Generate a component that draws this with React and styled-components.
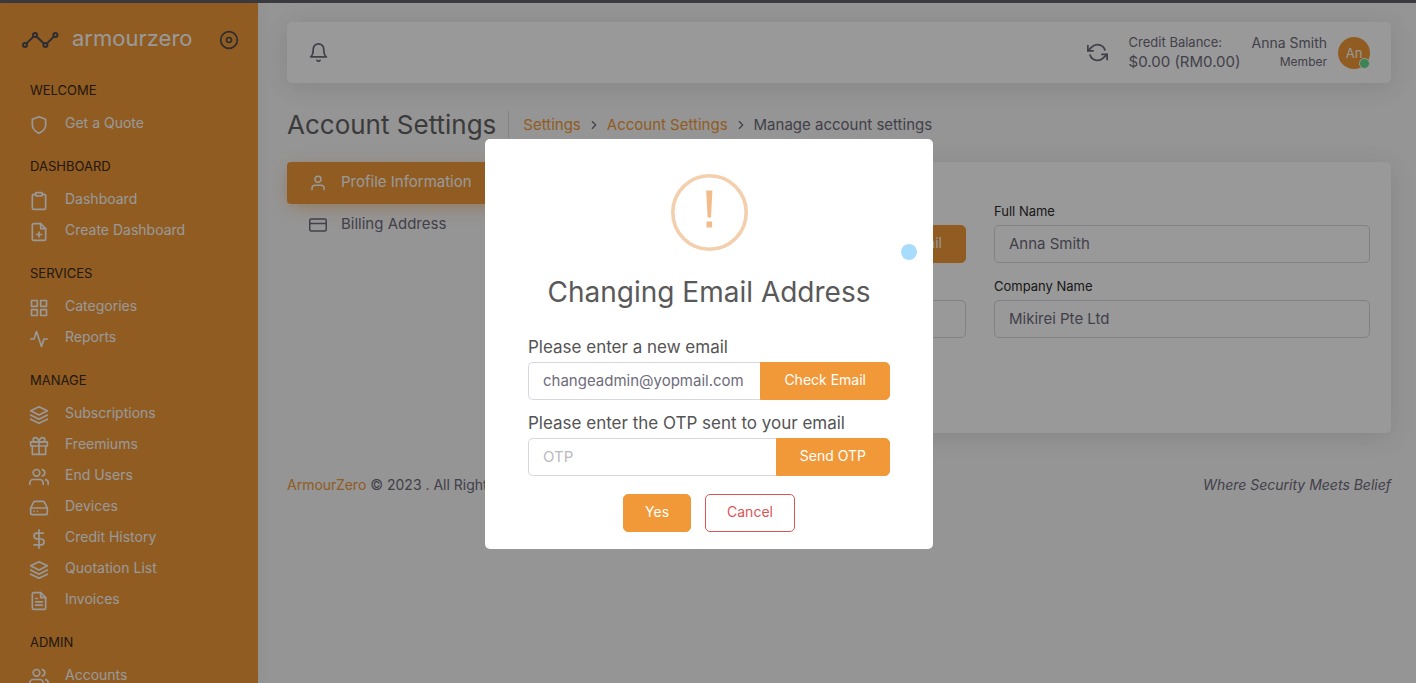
import React from "react";
import styled, { createGlobalStyle, css } from "styled-components";
import {
  FiActivity, FiBell, FiChevronRight, FiClipboard, FiCreditCard, FiDisc,
  FiDollarSign, FiFilePlus, FiFileText, FiGift, FiGrid, FiHardDrive,
  FiLayers, FiRefreshCcw, FiShield, FiUser, FiUsers,
} from "react-icons/fi";

const orange = "#f19938";
const bodyText = "#6e6b7b";

const GlobalStyle = createGlobalStyle`
  *, *::before, *::after { box-sizing: border-box; }
  body {
    margin: 0;
    background: #f8f8f8;
    color: ${bodyText};
    font: 400 14px/20px Inter, "Open Sans", sans-serif;
  }
  button, input { font: inherit; }
  a { text-decoration: none; color: inherit; }
`;

const Screen = styled.div`
  height: 100vh;
  display: flex;
  flex-direction: column;
  overflow: hidden;
`;

const TopStrip = styled.div`
  flex: none;
  height: 3px;
  background: #3a3a3f;
`;

const Shell = styled.div`
  flex: 1;
  min-height: 0;
  display: flex;
`;

const Sidebar = styled.aside`
  flex: none;
  width: 258px;
  overflow: hidden;
  background: ${orange};
  box-shadow: 0 0 15px rgba(34, 41, 47, 0.05);
`;

const Brand = styled.div`
  display: flex;
  align-items: center;
  height: 73px;
  padding: 0 19px 0 22px;
`;

const BrandName = styled.a`
  flex: 1;
  margin-left: 13px;
  padding-bottom: 4px;
  color: #fff;
  font-size: 22px;
  line-height: 28px;
`;

const PinButton = styled.button`
  display: flex;
  padding: 0;
  border: 0;
  background: none;
  color: #4a4a52;
  font-size: 20px;
`;

const MenuGroup = styled.section`
  padding: 0 29px;
  margin: 5px 0 18px;

  & + & { margin-top: 0; }
`;

const MenuHeading = styled.h2`
  margin: 0 0 8px 1px;
  color: #38281c;
  font-size: 13px;
  font-weight: 400;
  line-height: 19px;
`;

const MenuLink = styled.a`
  display: flex;
  align-items: center;
  gap: 16px;
  height: 31px;
  padding-bottom: 2px;
  color: #fff;
  white-space: nowrap;

  svg { flex: none; font-size: 20px; margin-top: 5px; }
`;

const Main = styled.main`
  flex: 1;
  min-width: 0;
  padding: 19px 25px 0 29px;
`;

const panel = css`
  background: #fff;
  border-radius: 5px;
  box-shadow: 0 4px 24px rgba(34, 41, 47, 0.12);
`;

const Navbar = styled.header`
  ${panel}
  display: flex;
  align-items: center;
  height: 61px;
  padding: 0 21px;
`;

const IconButton = styled.button`
  display: flex;
  padding: 0;
  border: 0;
  background: none;
  color: ${bodyText};
  font-size: 21px;
`;

const NavRight = styled.div`
  display: flex;
  align-items: center;
  margin-left: auto;
`;

const NavText = styled.div`
  display: flex;
  flex-direction: column;
  margin-left: ${(p) => p.$gap}px;
  padding-bottom: 2px;
  text-align: ${(p) => p.$align || "left"};
`;

const NavLine = styled.span`
  font-size: ${(p) => p.$size}px;
  line-height: 19px;
`;

const Avatar = styled.div`
  position: relative;
  display: grid;
  place-items: center;
  width: 32px;
  height: 32px;
  margin-left: 11px;
  border-radius: 50%;
  background: ${orange};
  color: #fff;
  font-size: 13px;

  &::after {
    content: "";
    position: absolute;
    right: 0;
    bottom: 0;
    width: 11px;
    height: 11px;
    border: 1px solid #fff;
    border-radius: 50%;
    background: #64dd8a;
  }
`;

const PageHead = styled.div`
  display: flex;
  align-items: center;
  height: 27px;
  margin: 28px 0 24px;
`;

const PageTitle = styled.h1`
  margin: 0;
  padding-right: 12px;
  border-right: 1px solid #d6dce1;
  color: #636363;
  font-size: 26px;
  font-weight: 400;
  line-height: 27px;
`;

const Breadcrumb = styled.nav`
  display: flex;
  align-items: center;
  gap: 6px;
  margin-left: 14px;
  font-size: 15px;

  a { color: ${orange}; }
  svg { font-size: 14px; }
`;

const Columns = styled.div`
  display: flex;
  align-items: flex-start;
  gap: 27px;
`;

const Tabs = styled.nav`
  flex: none;
  width: 255px;
`;

const TabLink = styled.a`
  display: flex;
  align-items: center;
  gap: 14px;
  height: 42px;
  padding: 0 22px 2px;
  border-radius: 4px;
  font-size: 15px;

  svg { font-size: 18px; margin-top: 2px; }

  ${(p) => p.$active && css`
    background: ${orange};
    color: #fff;
    box-shadow: 0 4px 18px -4px rgba(241, 153, 56, 0.65);
  `}
`;

const FormCard = styled.form`
  ${panel}
  flex: 1;
  display: grid;
  grid-template-columns: 1fr 1fr;
  align-items: end;
  gap: 14px 28px;
  padding: 40px 21px 95px;
`;

const FormField = styled.div`
  display: grid;
  gap: 4px;
`;

const FormLabel = styled.label`
  color: #2c2c2c;
  font-size: 13px;
  line-height: 19px;
`;

const Group = styled.div`
  display: flex;

  input { border-right: 0; border-radius: 5px 0 0 5px; }
  button { padding: 0 23px 2px; border-radius: 0 5px 5px 0; }
`;

const TextInput = styled.input`
  flex: 1;
  width: 100%;
  min-width: 0;
  height: 38px;
  padding: 0 14px 2px;
  border: 1px solid #d8d6de;
  border-radius: 5px;
  outline: 0;
  background: transparent;
  color: ${bodyText};
  font-size: 15px;

  &::placeholder { color: #b9b9c3; opacity: 1; }
`;

const Button = styled.button`
  flex: none;
  height: 38px;
  padding: 0 21px 2px;
  border: 1px solid ${(p) => (p.$outline ? "#d95555" : orange)};
  border-radius: 5px;
  background: ${(p) => (p.$outline ? "#fff" : orange)};
  color: ${(p) => (p.$outline ? "#d95555" : "#fff")};
`;

const Footer = styled.footer`
  display: flex;
  justify-content: space-between;
  margin-top: 42px;

  a { color: ${orange}; }
`;

const Overlay = styled.div`
  position: fixed;
  inset: 3px 0 0;
  display: flex;
  align-items: center;
  justify-content: center;
  padding: 2px 0 0 2px;
  background: rgba(0, 0, 0, 0.4);
`;

const Dialog = styled.div`
  position: relative;
  display: flex;
  flex-direction: column;
  width: 448px;
  padding: 35px 43px 17px;
  border-radius: 5px;
  background: #fff;
  color: #545454;
`;

const WarningIcon = styled.svg`
  align-self: center;
  width: 77px;
  height: 77px;
`;

const DialogTitle = styled.h2`
  margin: 21px 0 23px;
  color: #595959;
  font-size: 28px;
  font-weight: 400;
  line-height: 40px;
  text-align: center;
  white-space: nowrap;
`;

const DialogField = styled.div`
  margin-bottom: ${(p) => (p.$last ? 18 : 11)}px;
`;

const DialogLabel = styled.label`
  display: block;
  margin-bottom: 3px;
  font-size: 17px;
  line-height: 24px;
`;

const DialogActions = styled.div`
  display: flex;
  justify-content: center;
  gap: 14px;
`;

const Pointer = styled.span`
  position: absolute;
  top: 105px;
  right: 16px;
  width: 16px;
  height: 16px;
  border-radius: 50%;
  background: #a8dcfc;
`;

const menu = [
  ["WELCOME", [["Get a Quote", FiShield]]],
  ["DASHBOARD", [["Dashboard", FiClipboard], ["Create Dashboard", FiFilePlus]]],
  ["SERVICES", [["Categories", FiGrid], ["Reports", FiActivity]]],
  ["MANAGE", [
    ["Subscriptions", FiLayers], ["Freemiums", FiGift], ["End Users", FiUsers],
    ["Devices", FiHardDrive], ["Credit History", FiDollarSign],
    ["Quotation List", FiLayers], ["Invoices", FiFileText],
  ]],
  ["ADMIN", [["Accounts", FiUsers]]],
];

function Logo() {
  return (
    <svg width="37" height="18" viewBox="0 0 37 18" fill="none" stroke="#4a4a52" strokeWidth="2" aria-hidden="true">
      <circle cx="3" cy="14" r="2" />
      <circle cx="13" cy="4" r="2" />
      <circle cx="23.4" cy="14" r="2" />
      <circle cx="33.4" cy="4" r="2" />
      <path d="M4.6 12.4 11.4 5.6M14.6 5.6l7.2 6.8M25 12.4l6.8-6.8" />
    </svg>
  );
}

export default function App() {
  return (
    <Screen>
      <GlobalStyle />
      <TopStrip />
      <Shell>
        <Sidebar>
          <Brand>
            <Logo />
            <BrandName href="#">armourzero</BrandName>
            <PinButton type="button" aria-label="Pin menu"><FiDisc /></PinButton>
          </Brand>
          {menu.map(([title, items]) => (
            <MenuGroup key={title}>
              <MenuHeading>{title}</MenuHeading>
              {items.map(([label, Icon]) => (
                <MenuLink href="#" key={label}><Icon />{label}</MenuLink>
              ))}
            </MenuGroup>
          ))}
        </Sidebar>
        <Main>
          <Navbar>
            <IconButton type="button" aria-label="Notifications"><FiBell /></IconButton>
            <NavRight>
              <IconButton type="button" aria-label="Refresh"><FiRefreshCcw /></IconButton>
              <NavText $gap={21}>
                <NavLine $size={13}>Credit Balance:</NavLine>
                <NavLine $size={15}>$0.00 (RM0.00)</NavLine>
              </NavText>
              <NavText $gap={11} $align="right">
                <NavLine $size={14}>Anna Smith</NavLine>
                <NavLine $size={12}>Member</NavLine>
              </NavText>
              <Avatar>An</Avatar>
            </NavRight>
          </Navbar>
          <PageHead>
            <PageTitle>Account Settings</PageTitle>
            <Breadcrumb>
              <a href="#">Settings</a>
              <FiChevronRight />
              <a href="#">Account Settings</a>
              <FiChevronRight />
              <span>Manage account settings</span>
            </Breadcrumb>
          </PageHead>
          <Columns>
            <Tabs>
              <TabLink href="#" $active><FiUser />Profile Information</TabLink>
              <TabLink href="#"><FiCreditCard />Billing Address</TabLink>
            </Tabs>
            <FormCard>
              <Group>
                <TextInput aria-label="Email" />
                <Button type="button">Change Email</Button>
              </Group>
              <FormField>
                <FormLabel htmlFor="name">Full Name</FormLabel>
                <TextInput id="name" defaultValue="Anna Smith" />
              </FormField>
              <TextInput aria-label="Phone" />
              <FormField>
                <FormLabel htmlFor="company">Company Name</FormLabel>
                <TextInput id="company" defaultValue="Mikirei Pte Ltd" />
              </FormField>
            </FormCard>
          </Columns>
          <Footer>
            <span><a href="#">ArmourZero</a> © 2023 . All Rights Reserved</span>
            <em>Where Security Meets Belief</em>
          </Footer>
        </Main>
      </Shell>
      <Overlay>
        <Dialog role="dialog" aria-modal="true" aria-labelledby="dialog-title">
          <WarningIcon viewBox="0 0 77 77" aria-hidden="true">
            <circle cx="38.5" cy="38.5" r="36.7" fill="none" stroke="#f4cfae" strokeWidth="3.6" />
            <path d="M35.2 16.5h6.2l-1.4 27h-3.4zM35.5 47.5h5.6v6h-5.6z" fill="#f2bb8a" />
          </WarningIcon>
          <DialogTitle id="dialog-title">Changing Email Address</DialogTitle>
          <DialogField>
            <DialogLabel htmlFor="new-email">Please enter a new email</DialogLabel>
            <Group>
              <TextInput id="new-email" defaultValue="changeadmin@yopmail.com" />
              <Button type="button">Check Email</Button>
            </Group>
          </DialogField>
          <DialogField $last>
            <DialogLabel htmlFor="otp">Please enter the OTP sent to your email</DialogLabel>
            <Group>
              <TextInput id="otp" placeholder="OTP" />
              <Button type="button">Send OTP</Button>
            </Group>
          </DialogField>
          <DialogActions>
            <Button type="button">Yes</Button>
            <Button type="button" $outline>Cancel</Button>
          </DialogActions>
          <Pointer />
        </Dialog>
      </Overlay>
    </Screen>
  );
}
